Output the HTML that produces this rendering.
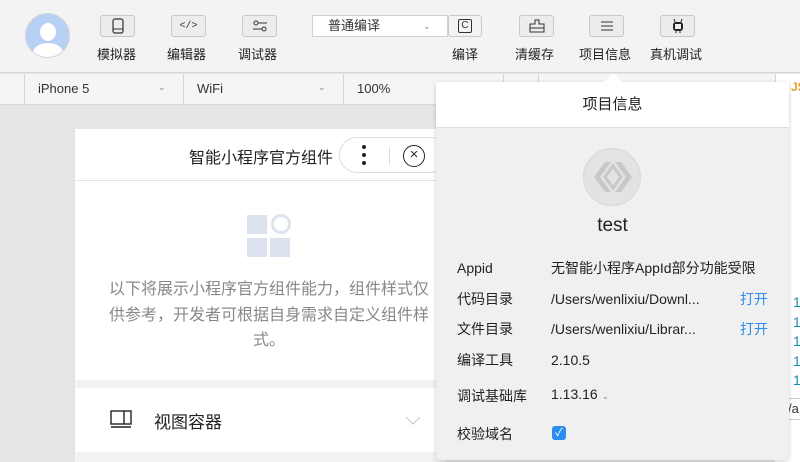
<!DOCTYPE html>
<html><head><meta charset="utf-8"><style>
*{margin:0;padding:0;box-sizing:border-box}
body{width:800px;height:462px;overflow:hidden;background:#e5e5e5;font-family:"Liberation Sans","Noto Sans CJK SC",sans-serif;position:relative;color:#333}
.abs{position:absolute}
.top{left:0;top:0;width:800px;height:73px;background:#f3f3f3;border-bottom:1px solid #d6d6d6}
.btn{position:absolute;top:15px;width:35px;height:22px;border:1px solid #c8c8c8;border-radius:3px;background:#ececec;display:flex;align-items:center;justify-content:center}
.lbl{position:absolute;top:44px;font-size:13px;color:#222;white-space:nowrap}
.bar2{left:0;top:74px;width:800px;height:31px;background:#f5f5f5;border-bottom:1px solid #d8d8d8;font-size:13px;color:#333}
.sep{position:absolute;top:0;width:1px;height:31px;background:#d8d8d8}
.chev{position:absolute;top:8px;font-size:9px;color:#888}
</style></head><body>
<div class="abs top"></div>
<div class="abs" style="left:25px;top:13px;width:45px;height:45px;border-radius:50%;background:#b9d0f5;border:1px solid #d5d5d5;overflow:hidden">
<div class="abs" style="left:14px;top:9px;width:16px;height:18px;border-radius:50%;background:#fff"></div>
<div class="abs" style="left:7px;top:29px;width:30px;height:20px;border-radius:50% 50% 0 0;background:#fff"></div></div>
<div class="btn" style="left:100px"><svg width="14" height="16"><rect x="2" y="1" width="10" height="14" rx="2" fill="none" stroke="#333" stroke-width="1.2"/><line x1="2" y1="11" x2="12" y2="11" stroke="#333"/></svg></div>
<div class="lbl" style="left:97px">模拟器</div>
<div class="btn" style="left:171px;font-size:10px;font-family:'Liberation Mono',monospace">&lt;/&gt;</div>
<div class="lbl" style="left:167px">编辑器</div>
<div class="btn" style="left:242px"><svg width="16" height="12"><circle cx="4" cy="3" r="2" fill="none" stroke="#333"/><line x1="6" y1="3" x2="15" y2="3" stroke="#333"/><circle cx="12" cy="9" r="2" fill="none" stroke="#333"/><line x1="1" y1="9" x2="10" y2="9" stroke="#333"/></svg></div>
<div class="lbl" style="left:238px">调试器</div>
<div class="abs" style="left:312px;top:15px;width:136px;height:22px;background:#fff;border:1px solid #d0d0d0;font-size:13px;line-height:20px;padding:0 15px">普通编译<span style="position:absolute;left:110px;top:0;font-size:9px;color:#888">⌄</span></div>
<div class="btn" style="left:448px;width:34px;background:#f3f3f3"><span style="border:1.2px solid #333;border-radius:2px;font-size:10px;padding:0 2px;line-height:12px">C</span></div>
<div class="lbl" style="left:452px">编译</div>
<div class="btn" style="left:519px"><svg width="16" height="14"><path d="M6 1h4v4h5v8H1V5h5z" fill="none" stroke="#333"/><line x1="1" y1="9" x2="15" y2="9" stroke="#333"/></svg></div>
<div class="lbl" style="left:515px">清缓存</div>
<div class="btn" style="left:589px"><svg width="14" height="12"><path d="M1 2h12M1 6h12M1 10h12" stroke="#333"/></svg></div>
<div class="lbl" style="left:579px">项目信息</div>
<div class="btn" style="left:660px"><svg width="14" height="16"><rect x="2" y="4" width="10" height="9" rx="3" fill="#222"/><rect x="4" y="6" width="6" height="5" fill="#eee"/><path d="M4 4L3 1M10 4l1-3M5 13v2M9 13v2" stroke="#222"/></svg></div>
<div class="lbl" style="left:650px">真机调试</div>
<div class="abs bar2">
<div class="sep" style="left:24px"></div><div class="sep" style="left:183px"></div><div class="sep" style="left:343px"></div><div class="sep" style="left:503px"></div><div class="sep" style="left:538px"></div>
<span class="abs" style="left:38px;top:7px">iPhone 5</span><span class="chev" style="left:158px">⌄</span>
<span class="abs" style="left:197px;top:7px">WiFi</span><span class="chev" style="left:318px">⌄</span>
<span class="abs" style="left:357px;top:7px">100%</span>
<div class="abs" style="left:775px;top:0;width:25px;height:31px;background:#fff;border-left:1px solid #d8d8d8"></div>
<span class="abs" style="left:791px;top:6px;color:#e6a020;font-size:12px;font-weight:bold">JS</span>
</div>
<div class="abs" style="left:775px;top:105px;width:25px;height:357px;background:#fff"></div>
<div class="abs" style="left:793px;top:293px;color:#1a8bb0;font-size:14px;line-height:19.5px">1<br>1<br>1<br>1<br>1</div>
<div class="abs" style="left:780px;top:398px;width:20px;height:22px;border-top:1px solid #ccc;border-bottom:1px solid #ccc;font-size:13px;padding:2px 8px">/a</div>
<!-- phone -->
<div class="abs" style="left:75px;top:129px;width:370px;height:333px;background:#fff">
<div class="abs" style="left:0;top:0;width:370px;height:52px;border-bottom:1px solid #e4e4e4"></div>
<div class="abs" style="left:114px;top:15px;font-size:16px;color:#222">智能小程序官方组件</div>
<div class="abs" style="left:264px;top:8px;width:110px;height:36px;border:1px solid #ddd;border-radius:18px;background:#fff"></div>
<div class="abs" style="left:287px;top:16px;width:4px;height:20px;display:flex;flex-direction:column;justify-content:space-between"><i style="width:4px;height:4px;border-radius:50%;background:#222"></i><i style="width:4px;height:4px;border-radius:50%;background:#222"></i><i style="width:4px;height:4px;border-radius:50%;background:#222"></i></div>
<div class="abs" style="left:314px;top:18px;width:1px;height:18px;background:#ddd"></div>
<div class="abs" style="left:328px;top:16px;width:22px;height:22px;border:1.5px solid #222;border-radius:50%;text-align:center;font-size:15px;line-height:18px">×</div>
<div class="abs" style="left:172px;top:86px;width:20px;height:19px;background:#dde3ee"></div>
<div class="abs" style="left:196px;top:85px;width:20px;height:20px;border:3px solid #dde3ee;border-radius:50%"></div>
<div class="abs" style="left:172px;top:109px;width:20px;height:19px;background:#dde3ee"></div>
<div class="abs" style="left:195px;top:109px;width:20px;height:19px;background:#dde3ee"></div>
<div class="abs" style="left:33px;top:148px;width:322px;font-size:16px;line-height:25.5px;color:#888;text-align:center">以下将展示小程序官方组件能力，组件样式仅供参考，开发者可根据自身需求自定义组件样式。</div>
<div class="abs" style="left:0;top:251px;width:370px;height:8px;background:#f3f3f3"></div>
<svg class="abs" style="left:35px;top:281px" width="22" height="18"><rect x="1" y="1" width="20" height="13" fill="none" stroke="#222" stroke-width="1.4"/><line x1="14" y1="1" x2="14" y2="14" stroke="#222" stroke-width="1.4"/><line x1="1" y1="17" x2="21" y2="17" stroke="#222" stroke-width="1.4"/></svg>
<div class="abs" style="left:79px;top:279px;font-size:17px;color:#222">视图容器</div>
<svg class="abs" style="left:330px;top:287px" width="16" height="9"><path d="M1 1l7 7 7-7" fill="none" stroke="#ccc" stroke-width="1.2"/></svg>
<div class="abs" style="left:0;top:323px;width:370px;height:10px;background:#f3f3f3"></div>
</div>
<!-- popup -->
<div class="abs" style="left:436px;top:82px;width:353px;height:378px;background:#f0f0f0;box-shadow:0 1px 4px rgba(0,0,0,.2);border-radius:3px">
<div class="abs" style="left:0;top:0;width:353px;height:46px;background:#fff;border-bottom:1px solid #e0e0e0;text-align:center;font-size:15px;line-height:46px;color:#222">项目信息</div>
<div class="abs" style="left:147px;top:66px;width:58px;height:58px;border-radius:50%;background:#e3e3e3;border:1px solid #d8d8d8"></div>
<svg class="abs" style="left:156px;top:78px" width="42" height="34"><path d="M13 2L2 17l11 15h6L8 17 19 2z M29 2h-6l11 15-11 15h6l11-15z" fill="#c8c8c8"/><path d="M21 6l8 11-8 11-8-11z" fill="none" stroke="#c8c8c8" stroke-width="3"/></svg>
<div class="abs" style="left:0;top:133px;width:353px;text-align:center;font-size:19px;color:#222">test</div>
<div class="abs" style="left:21px;top:171px;font-size:14px;line-height:30.5px;color:#222">Appid<br>代码目录<br>文件目录<br>编译工具</div>
<div class="abs" style="left:115px;top:171px;font-size:14px;line-height:30.5px;color:#222;white-space:nowrap">无智能小程序AppId部分功能受限<br>/Users/wenlixiu/Downl...<br>/Users/wenlixiu/Librar...<br>2.10.5</div>
<div class="abs" style="left:304px;top:201.5px;font-size:14px;line-height:30.5px;color:#2d8cf0">打开<br>打开</div>
<div class="abs" style="left:21px;top:304px;font-size:14px;color:#222">调试基础库</div>
<div class="abs" style="left:115px;top:304px;font-size:14px;color:#222">1.13.16 <span style="font-size:9px;color:#888">⌄</span></div>
<div class="abs" style="left:21px;top:342px;font-size:14px;color:#222">校验域名</div>
<div class="abs" style="left:116px;top:344px;width:14px;height:14px;border-radius:3px;background:#2d8cf0;color:#fff;font-size:11px;line-height:14px;text-align:center">✓</div>
</div>
<div class="abs" style="left:603px;top:73px;width:0;height:0;border-left:10px solid transparent;border-right:10px solid transparent;border-bottom:10px solid #fff"></div>
</body></html>
